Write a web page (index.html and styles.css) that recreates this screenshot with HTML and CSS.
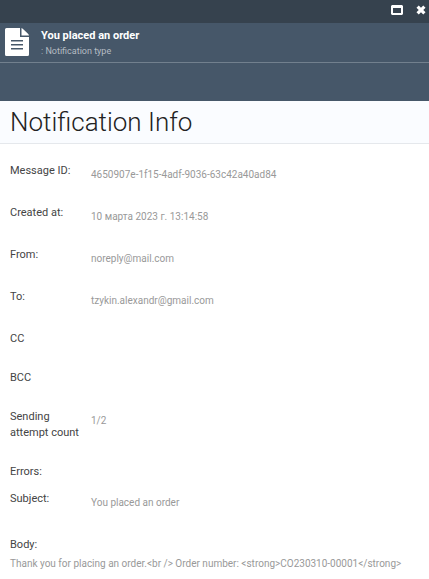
FILE: index.html
```html
<!DOCTYPE html>
<html lang="en">
<head>
<meta charset="utf-8">
<title>Notification Info</title>
<link rel="stylesheet" href="styles.css">
</head>
<body>
<main class="blade">
  <div class="window-bar">
    <button class="window-button" type="button" aria-label="Maximize">
      <svg width="12" height="10" viewBox="0 0 12 10"><path fill="#fff" fill-rule="evenodd" d="M1 0h10l1 1v8l-1 1H1L0 9V1zM2 3v5h8V3z"/></svg>
    </button>
    <button class="window-button" type="button" aria-label="Close">
      <svg width="10" height="10" viewBox="0 0 10 10"><path d="M1.600 1.600l6.800 6.800M8.400 1.600L1.600 8.400" stroke="#fff" stroke-width="3.200"/></svg>
    </button>
  </div>
  <header class="blade-head">
    <svg class="blade-icon" width="24" height="28" viewBox="0 0 24 28"><path fill="#fff" fill-rule="evenodd" d="M1.500 0H15v9h9V26.500Q24 28 22.500 28h-21Q0 28 0 26.500v-25Q0 0 1.500 0zM6 12v1.500h12V12zM6 16v1.500h12V16zM6 20v1.500h12V20z"/><path fill="#fff" d="M16.500 0Q17.500.300 18 1l5 4.800q.700.600 1 1.700h-7.500z"/></svg>
    <div class="blade-titles">
      <div class="blade-title">You placed an order</div>
      <div class="blade-subtitle">: Notification type</div>
    </div>
  </header>
  <div class="toolbar"></div>
  <h1 class="heading">Notification Info</h1>
  <dl class="details">
    <div class="row"><dt>Message ID:</dt><dd>4650907e-1f15-4adf-9036-63c42a40ad84</dd></div>
    <div class="row"><dt>Created at:</dt><dd>10 марта 2023 г. 13:14:58</dd></div>
    <div class="row"><dt>From:</dt><dd>noreply@mail.com</dd></div>
    <div class="row"><dt>To:</dt><dd>tzykin.alexandr@gmail.com</dd></div>
    <div class="row row-short"><dt>CC</dt><dd></dd></div>
    <div class="row row-short"><dt>BCC</dt><dd></dd></div>
    <div class="row row-short"><dt>Sending attempt count</dt><dd>1/2</dd></div>
    <div class="row row-compact"><dt>Errors:</dt><dd></dd></div>
    <div class="row row-subject"><dt>Subject:</dt><dd>You placed an order</dd></div>
    <div class="body-row"><dt>Body:</dt><dd>Thank you for placing an order.&lt;br /&gt; Order number: &lt;strong&gt;CO230310-00001&lt;/strong&gt;</dd></div>
  </dl>
</main>
</body>
</html>
```
FILE: styles.css
```css
* {
  box-sizing: border-box;
}

body {
  margin: 0;
  background: #fff;
  color: #333;
  font-family: Roboto, "Liberation Sans", sans-serif;
}

.window-bar {
  display: flex;
  justify-content: flex-end;
  align-items: center;
  gap: 13px;
  height: 23px;
  padding: 0 3px 3px 0;
  background: #36424e;
}

.window-button {
  display: flex;
  padding: 0;
  border: 0;
  background: none;
}

.blade-head {
  display: flex;
  gap: 12px;
  height: 40px;
  padding: 5px;
  border-bottom: 1px solid #72808e;
  background: #465769;
}

.blade-icon {
  flex: none;
}

.blade-title {
  color: #fff;
  font-size: 11px;
  font-weight: 700;
  line-height: 16px;
}

.blade-subtitle {
  color: #b5bcc3;
  font-size: 9px;
  line-height: 14px;
}

.toolbar {
  height: 38px;
  background: #465769;
}

.heading {
  margin: 0;
  padding: 3px 10px;
  border-bottom: 1px solid #e5e8ec;
  background: #fafcff;
  color: #222;
  font-size: 26px;
  font-weight: 300;
  line-height: 36px;
}

.details {
  margin: 0;
  padding: 19px 10px 8px;
}

.row {
  display: grid;
  grid-template-columns: 72px 1fr;
  column-gap: 9px;
  padding-bottom: 26px;
}

.row-short {
  padding-bottom: 23px;
}

.row-compact {
  padding-bottom: 11px;
}

.row-subject {
  padding-bottom: 30px;
}

dt {
  color: #444;
  font-size: 11px;
  line-height: 16px;
}

dd {
  margin: 0;
  color: #999;
  font-size: 10px;
  line-height: 16px;
}

.row dd {
  padding-top: 4px;
  margin-bottom: -4px;
}

.body-row dd {
  padding-top: 3px;
}
```
